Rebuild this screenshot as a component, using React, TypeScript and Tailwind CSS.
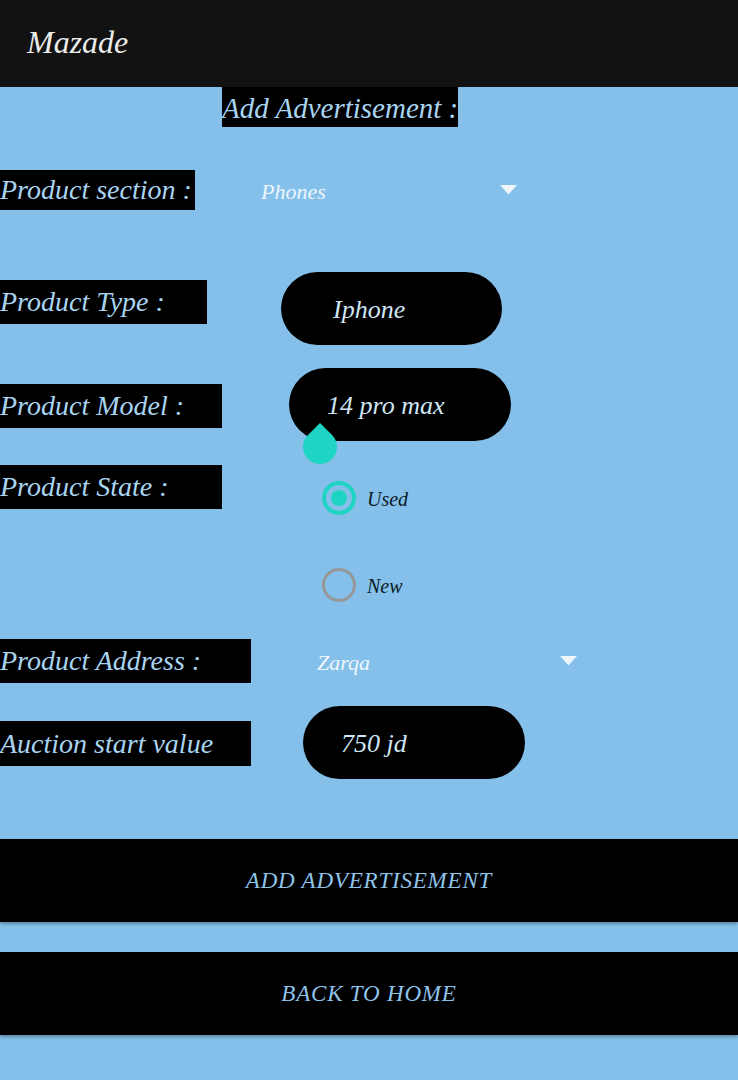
import React from "react";

function Label({ text, w, mt = 0, h = 44 }: { text: string; w: string; mt?: number; h?: number }) {
  return (
    <div
      className={`${w} bg-black text-[#a9d4f1] italic text-[28px] leading-none flex items-center shrink-0 whitespace-nowrap overflow-hidden`}
      style={{ marginTop: mt, height: h }}
    >
      <span>{text}</span>
    </div>
  );
}

function Arrow() {
  return (
    <svg width="17" height="10" viewBox="0 0 17 10" className="shrink-0">
      <path d="M0 0 L17 0 L8.5 9.5 Z" fill="#eef6fc" />
    </svg>
  );
}

function Radio({ checked }: { checked: boolean }) {
  return checked ? (
    <div className="w-[34px] h-[34px] rounded-full border-[4px] border-[#1fd4c2] flex items-center justify-center shrink-0">
      <div className="w-[16px] h-[16px] rounded-full bg-[#1fd4c2]" />
    </div>
  ) : (
    <div className="w-[34px] h-[34px] rounded-full border-[3px] border-[#979797] shrink-0" />
  );
}

export default function App() {
  return (
    <div className="min-h-[1080px] w-full bg-[#84c0e9] italic font-['Liberation_Serif','Times_New_Roman',serif]">
      <div className="h-[87px] bg-[#121212] flex items-center pl-[27px]">
        <span className="text-[32px] text-[#ececec] leading-none -mt-[4px]">Mazade</span>
      </div>

      <div className="ml-[222px] w-[236px] h-[40px] bg-black flex items-center text-[#a9d4f1] text-[29px] leading-none whitespace-nowrap">
        <span className="mt-[2px]">Add Advertisement :</span>
      </div>

      {/* Product section */}
      <div className="flex items-center mt-[43px] h-[40px]">
        <Label text="Product section :" w="w-[195px]" h={40} />
        <div className="ml-[66px] w-[256px] flex items-center justify-between">
          <span className="text-[22px] text-[#eef6fc] leading-none mt-[3px]">Phones</span>
          <Arrow />
        </div>
      </div>

      {/* Product type */}
      <div className="flex items-start mt-[62px] h-[73px]">
        <Label text="Product Type :" w="w-[207px]" mt={8} />
        <div className="ml-[74px] w-[221px] h-[73px] rounded-full bg-black flex items-center pl-[52px]">
          <span className="text-[26px] text-[#cfe6f6] leading-none mt-[2px]">Iphone</span>
        </div>
      </div>

      {/* Product model */}
      <div className="flex items-start mt-[23px] h-[73px]">
        <Label text="Product Model :" w="w-[222px]" mt={16} />
        <div className="relative ml-[67px] w-[222px] h-[73px] rounded-full bg-black flex items-center pl-[38px]">
          <span className="text-[26px] text-[#cfe6f6] leading-none mt-[2px]">14 pro max</span>
          <svg width="34" height="41" viewBox="0 0 34 41" className="absolute left-[14px] top-[55px]">
            <path d="M17 0 L29.02 11.98 A17 17 0 1 1 4.98 11.98 Z" fill="#1fd4c2" />
          </svg>
        </div>
      </div>

      {/* Product state */}
      <div className="flex items-start mt-[24px]">
        <Label text="Product State :" w="w-[222px]" />
        <div className="ml-[100px] mt-[16px] flex flex-col">
          <div className="flex items-center h-[34px] gap-[11px]">
            <Radio checked />
            <span className="text-[20px] text-[#0d1b2a] leading-none mt-[2px]">Used</span>
          </div>
          <div className="flex items-center h-[34px] gap-[11px] mt-[53px]">
            <Radio checked={false} />
            <span className="text-[20px] text-[#0d1b2a] leading-none mt-[2px]">New</span>
          </div>
        </div>
      </div>

      {/* Product address */}
      <div className="flex items-center mt-[37px] h-[44px]">
        <Label text="Product Address :" w="w-[251px]" />
        <div className="ml-[66px] w-[260px] flex items-center justify-between">
          <span className="text-[22px] text-[#eef6fc] leading-none mt-[3px]">Zarqa</span>
          <Arrow />
        </div>
      </div>

      {/* Auction start value */}
      <div className="flex items-start mt-[23px] h-[73px]">
        <Label text="Auction start value" w="w-[251px]" mt={15} h={45} />
        <div className="ml-[52px] w-[222px] h-[73px] rounded-full bg-black flex items-center pl-[38px]">
          <span className="text-[26px] text-[#cfe6f6] leading-none mt-[2px]">750 jd</span>
        </div>
      </div>

      <button className="mt-[60px] w-full h-[83px] bg-black flex items-center justify-center shadow-[0_2px_3px_rgba(0,0,0,0.3)] font-['Liberation_Serif','Times_New_Roman',serif] italic">
        <span className="text-[23px] tracking-[0.8px] text-[#8fc4ea] leading-none">ADD ADVERTISEMENT</span>
      </button>
      <button className="mt-[30px] w-full h-[83px] bg-black flex items-center justify-center shadow-[0_2px_3px_rgba(0,0,0,0.3)] font-['Liberation_Serif','Times_New_Roman',serif] italic">
        <span className="text-[23px] tracking-[0.8px] text-[#8fc4ea] leading-none">BACK TO HOME</span>
      </button>
    </div>
  );
}
